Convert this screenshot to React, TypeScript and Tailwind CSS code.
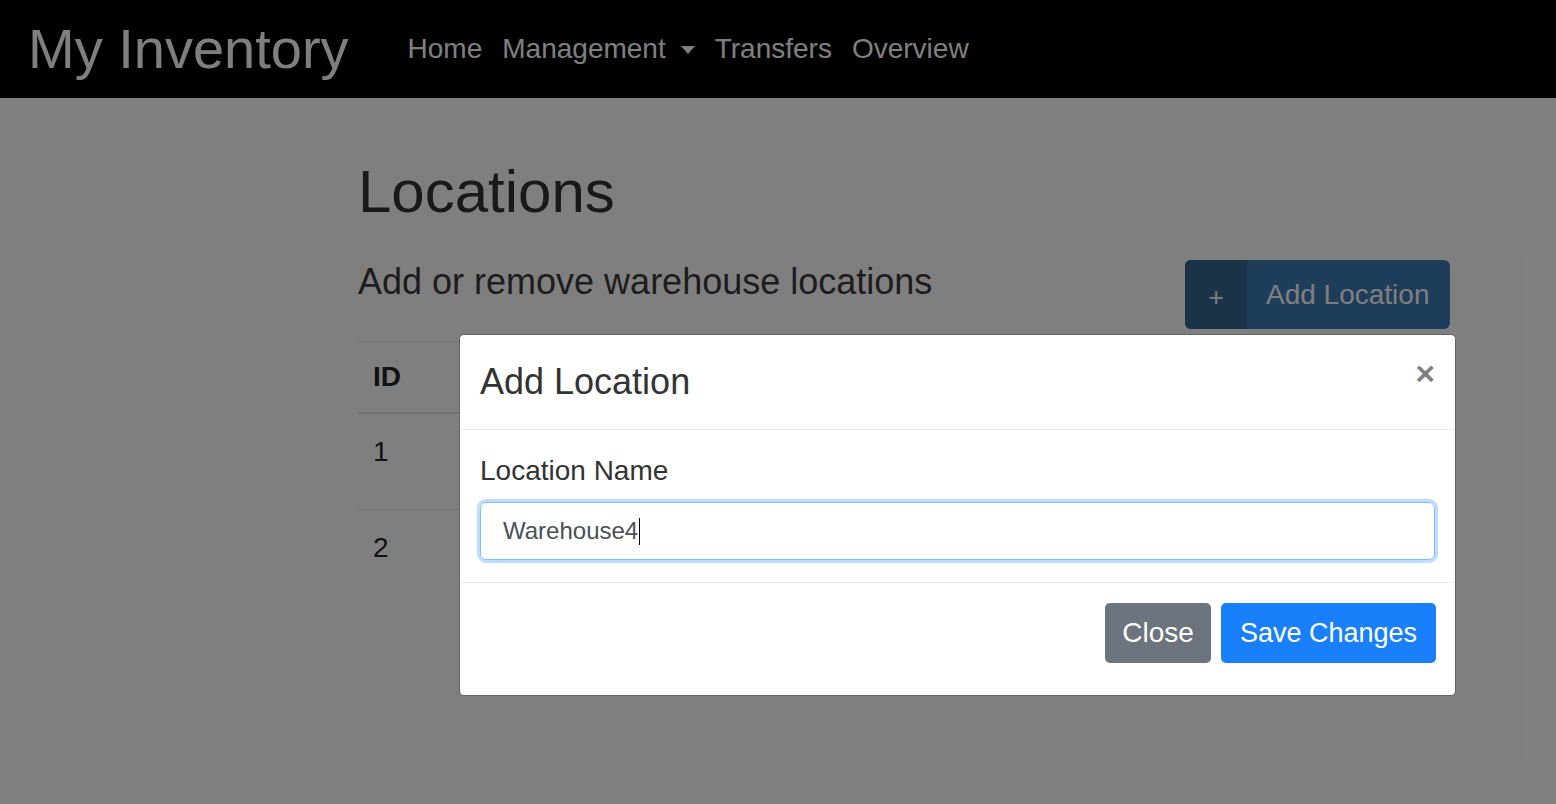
export default function App() {
  const rows = [{ id: 1 }, { id: 2 }];

  return (
    <div className="relative h-[804px] overflow-hidden bg-white font-['Liberation_Sans',Arial,sans-serif] text-[#212529]">
      {/* navbar */}
      <nav className="flex h-[98px] items-center bg-black px-[28px]">
        <span className="text-[56px] leading-none text-white">My Inventory</span>
        <ul className="ml-[59px] flex items-center text-[28px] leading-none text-white">
          <li>Home</li>
          <li className="ml-[20px] flex items-center">
            Management
            <span className="ml-[15px] mt-[2px] h-0 w-0 border-x-[7px] border-t-[8px] border-x-transparent border-t-white" />
          </li>
          <li className="ml-[20px]">Transfers</li>
          <li className="ml-[20px]">Overview</li>
        </ul>
      </nav>

      {/* page */}
      <main className="pl-[358px] pr-[106px] pt-[58px]">
        <h1 className="text-[60px] leading-[1.2] text-[#333]">Locations</h1>
        <div className="mt-[32px] flex items-start justify-between">
          <h2 className="text-[36px] leading-[1.2] text-[#3a3a3a]">Add or remove warehouse locations</h2>
          <button className="flex h-[69px] w-[265px] items-stretch overflow-hidden rounded-[6px] bg-[#3c7ab4] text-white">
            <span className="flex w-[62px] items-center justify-center bg-[#366692] pt-[6px] text-[26px] font-light">+</span>
            <span className="flex flex-1 items-center pl-[19px] text-[28px]">Add Location</span>
          </button>
        </div>

        {/* table (columns beyond ID sit under the modal) */}
        <table className="mt-[12px] w-full border-t border-[#dee2e6] text-left text-[28px] leading-[42px]">
          <thead>
            <tr className="border-b-2 border-[#dee2e6]">
              <th className="w-[120px] px-[15px] py-[14px] font-bold">ID</th>
              <th className="px-[15px] py-[14px]"></th>
            </tr>
          </thead>
          <tbody>
            {rows.map((r, i) => (
              <tr key={r.id} className={`h-[96px] align-top ${i > 0 ? 'border-t border-[#dee2e6]' : ''}`}>
                <td className="px-[15px] pb-[14px] pt-[17px]">{r.id}</td>
                <td className="px-[15px] pb-[14px] pt-[17px]"></td>
              </tr>
            ))}
          </tbody>
        </table>
      </main>

      {/* backdrop */}
      <div className="absolute inset-0 bg-black/50" />

      {/* modal */}
      <div className="absolute left-[459px] top-[334px] w-[997px] rounded-[5px] border border-black/20 bg-white bg-clip-padding">
        <div className="flex h-[95px] items-start justify-between border-b border-[#e9ecef] px-[20px] pt-[20px]">
          <h5 className="text-[36px] leading-[1.5] text-[#333]">Add Location</h5>
          <span className="mt-[1px] text-[34px] font-bold leading-none text-black/50">×</span>
        </div>
        <div className="border-b border-[#e9ecef] px-[20px] pb-[22px] pt-[20px]">
          <label className="block text-[28px] leading-[42px] text-[#333]">Location Name</label>
          <div className="mt-[10px] flex h-[58px] items-center rounded-[6px] border border-[#80bdff] pl-[22px] text-[24px] text-[#495057] shadow-[0_0_0_3px_rgba(0,123,255,0.25)]">
            Warehouse4
            <span className="ml-[1px] h-[27px] w-px bg-black" />
          </div>
        </div>
        <div className="flex justify-end gap-[10px] px-[19px] pb-[32px] pt-[20px]">
          <button className="h-[60px] w-[106px] rounded-[5px] bg-[#6c757d] text-[28px] text-white">Close</button>
          <button className="h-[60px] w-[215px] rounded-[5px] bg-[#1a7ffb] text-[27px] text-white">Save Changes</button>
        </div>
      </div>
    </div>
  );
}
